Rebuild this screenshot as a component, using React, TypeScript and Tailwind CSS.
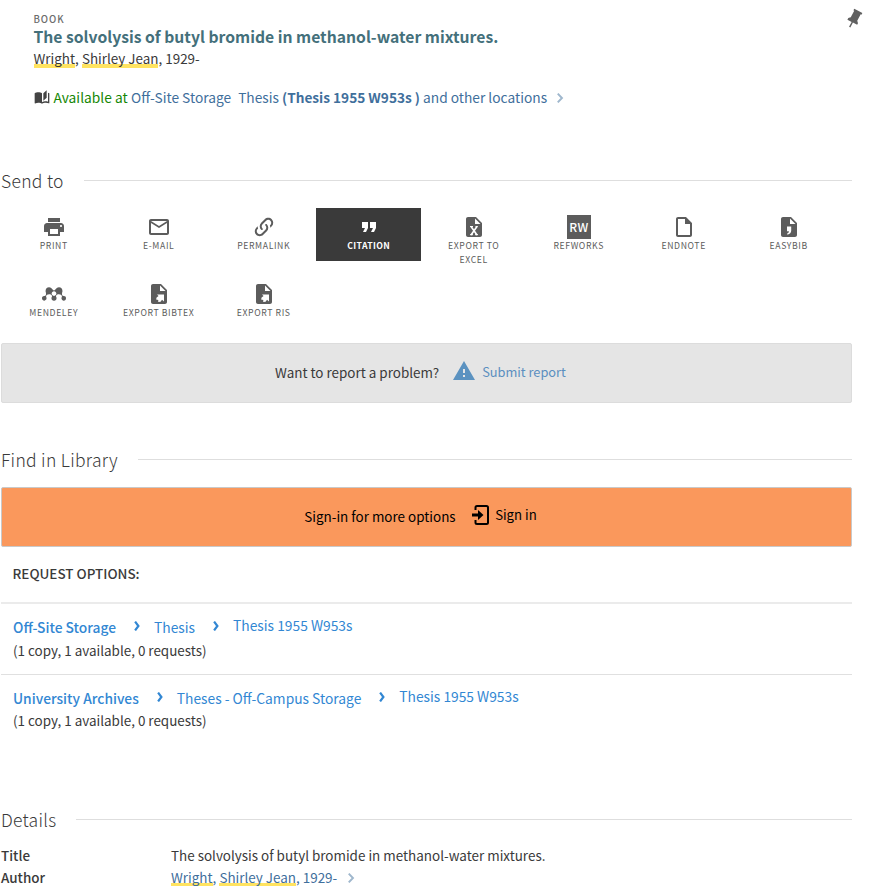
import type { ReactNode } from 'react';
import { FaMendeley } from 'react-icons/fa';

const FILE = 'M14 2H6c-1.1 0-2 .9-2 2v16c0 1.1.9 2 2 2h12c1.1 0 2-.9 2-2V8l-6-6zm-1 7V3.5L18.5 9H13z';
const PRINT =
  'M19 8H5c-1.66 0-3 1.34-3 3v6h4v4h12v-4h4v-6c0-1.66-1.34-3-3-3zm-3 11H8v-5h8v5zm3-7c-.55 0-1-.45-1-1s.45-1 1-1 1 .45 1 1-.45 1-1 1zm-1-9H6v4h12V3z';
const MAIL =
  'M22 6c0-1.1-.9-2-2-2H4c-1.1 0-2 .9-2 2v12c0 1.1.9 2 2 2h16c1.1 0 2-.9 2-2V6zm-2 0l-8 5-8-5h16zm0 12H4V8l8 5 8-5v10z';
const LINK =
  'M10.59,13.41C11,13.8 11,14.44 10.59,14.83C10.2,15.22 9.56,15.22 9.17,14.83C7.22,12.88 7.22,9.71 9.17,7.76V7.76L12.71,4.22C14.66,2.27 17.83,2.27 19.78,4.22C21.73,6.17 21.73,9.34 19.78,11.29L18.29,12.78C18.3,11.96 18.17,11.14 17.89,10.36L18.36,9.88C19.54,8.71 19.54,6.81 18.36,5.64C17.19,4.46 15.29,4.46 14.12,5.64L10.59,9.17C9.41,10.34 9.41,12.24 10.59,13.41M13.41,9.17C13.8,8.78 14.44,8.78 14.83,9.17C16.78,11.12 16.78,14.29 14.83,16.24V16.24L11.29,19.78C9.34,21.73 6.17,21.73 4.22,19.78C2.27,17.83 2.27,14.66 4.22,12.71L5.71,11.22C5.7,12.04 5.83,12.86 6.11,13.65L5.64,14.12C4.46,15.29 4.46,17.19 5.64,18.36C6.81,19.54 8.71,19.54 9.88,18.36L13.41,14.83C14.59,13.66 14.59,11.76 13.41,10.59C13,10.2 13,9.56 13.41,9.17Z';
const BOOK =
  'M19 2L14 6.5V17.5L19 13V2M6.5 5C4.55 5 2.45 5.4 1 6.5V21.16C1 21.41 1.25 21.66 1.5 21.66C1.6 21.66 1.65 21.59 1.75 21.59C3.1 20.94 5.05 20.5 6.5 20.5C8.45 20.5 10.55 20.9 12 22C13.35 21.15 15.8 20.5 17.5 20.5C19.15 20.5 20.85 20.81 22.25 21.56C22.35 21.61 22.4 21.59 22.5 21.59C22.75 21.59 23 21.34 23 21.09V6.5C22.4 6.05 21.75 5.75 21 5.5V19C19.9 18.65 18.7 18.5 17.5 18.5C15.8 18.5 13.35 19.15 12 20V6.5C10.55 5.4 8.45 5 6.5 5Z';

function Icon({ d, className = 'size-6', children }: { d?: string; className?: string; children?: ReactNode }) {
  return (
    <svg viewBox="0 0 24 24" fill="currentColor" className={`block shrink-0 ${className}`}>
      {d && <path d={d} />}
      {children}
    </svg>
  );
}

const Chevron = ({ className }: { className: string }) => (
  <Icon className={`size-[18px] text-[#9fb7cd] ${className}`}>
    <path d="M9 6.200 14.600 12 9 17.800" fill="none" stroke="currentColor" strokeWidth="2.600" />
  </Icon>
);

const CrumbChevron = ({ className = '' }: { className?: string }) => (
  <svg viewBox="0 0 6 10" className={`h-[10px] w-[6px] shrink-0 ${className}`} fill="none" stroke="#3287d3" strokeWidth="2.2">
    <path d="M1.100 .6 4.400 5 1.100 9.400" />
  </svg>
);

const ExportIcon = () => (
  <Icon d={FILE}>
    <path fill="#fff" d="M10 12.500h7v7l-2-1.800-1.400 2-2.400.200.1-2-2.200-.3.5-2.200 2-1.300z" />
  </Icon>
);

const actions: { label: string; icon: ReactNode; active?: boolean }[] = [
  { label: 'PRINT', icon: <Icon d={PRINT} /> },
  { label: 'E-MAIL', icon: <Icon d={MAIL} /> },
  { label: 'PERMALINK', icon: <Icon d={LINK} /> },
  { label: 'CITATION', icon: <Icon d="M6 17h3l2-4V7H5v6h3zm8 0h3l2-4V7h-6v6h3z" />, active: true },
  {
    label: 'EXPORT TO EXCEL',
    icon: (
      <Icon d={FILE}>
        <path d="M9 11.500 15 20M15 11.500 9 20" stroke="#fff" strokeWidth="1.6" />
        <path d="M8 11.500h3M8 19.700h3M13.500 11.500h2.300M13 19.700h3" stroke="#fff" strokeWidth="1" />
      </Icon>
    ),
  },
  {
    label: 'REFWORKS',
    icon: (
      <span className="flex size-6 items-center justify-center bg-[#5c5c5c] pl-px text-[12px] leading-6 font-medium tracking-[0.3px] text-white">
        RW
      </span>
    ),
  },
  { label: 'ENDNOTE', icon: <Icon d="M14 2H6c-1.1 0-2 .9-2 2v16c0 1.1.9 2 2 2h12c1.1 0 2-.9 2-2V8l-6-6zM6 20V4h7v5h5v11H6z" /> },
  {
    label: 'EASYBIB',
    icon: (
      <Icon d={FILE}>
        <path fill="#fff" d="M10 11.500h4.200v4.300c0 2-1.300 3.200-3.700 3.900l-.5-1.100c1.300-.5 1.900-1.200 1.900-2.300H10z" />
      </Icon>
    ),
  },
  { label: 'MENDELEY', icon: <FaMendeley className="size-6" /> },
  { label: 'EXPORT BIBTEX', icon: <ExportIcon /> },
  { label: 'EXPORT RIS', icon: <ExportIcon /> },
];

function Heading({ children }: { children: ReactNode }) {
  return (
    <div className="flex h-7 items-center gap-5 pl-px">
      <h2 className="text-[17.5px] leading-7 font-light tracking-[0.3px] whitespace-nowrap text-[#3a3a3a]">{children}</h2>
      <div className="-mt-px h-px flex-1 bg-[#dedede]" />
    </div>
  );
}

const Author = () => (
  <>
    <span className="bg-[linear-gradient(#ffe360,#ffe360)] bg-[length:100%_4px] bg-[position:0_16px] bg-no-repeat">Wright</span>,{' '}
    <span className="bg-[linear-gradient(#ffe360,#ffe360)] bg-[length:100%_4px] bg-[position:0_16px] bg-no-repeat">Shirley Jean</span>,
    1929-
  </>
);

function Holding({ library, area, call }: { library: string; area: string; call: string }) {
  return (
    <div className="group h-[71px] border-b border-[#e0e0e0] px-3 pt-[11px] last:border-b-0">
      <div className="flex h-6 text-[13.8px] text-[#3287d3]">
        <span className="leading-6 font-medium">{library}</span>
        <CrumbChevron className="mt-[6px] ml-[18px]" />
        <span className="ml-[14px] leading-6">{area}</span>
        <CrumbChevron className="mt-[6px] ml-[18px]" />
        <span className="-mt-[2px] ml-[14px] leading-6">{call}</span>
      </div>
      <div className="leading-[22px] group-last:-mt-px">(1 copy, 1 available, 0 requests)</div>
    </div>
  );
}

export default function App() {
  return (
    <div className="h-[886px] w-[869px] overflow-hidden bg-white font-['Noto_Sans_CJK_SC','Noto_Sans_CJK_JP',sans-serif] text-[13.45px] text-[#3a3a3a]">
      <header className="flex h-[167px] justify-between pt-[11px] pl-[33.5px]">
        <div>
          <div className="h-4 text-[9.6px] leading-4 font-medium tracking-[0.95px] text-[#6c6c6c]">BOOK</div>
          <h1 className="h-[19px] text-[15.7px] leading-5 font-bold text-[#44707b]">
            The solvolysis of butyl bromide in methanol-water mixtures.
          </h1>
          <div className="h-6 leading-6">
            <Author />
          </div>
          <div className="mt-[15px] flex h-6 items-center text-[13.75px] leading-6 text-[#3f6f9c]">
            <Icon d={BOOK} className="mr-1 size-[16px] text-[#444]" />
            <span className="text-[#168705]">Available at</span>
            <span className="ml-[3.5px]">Off-Site Storage</span>
            <span className="ml-[7px]">Thesis</span>
            <b className="ml-[3px] text-[13.65px]">(Thesis 1955 W953s )</b>
            <span className="ml-[3px]">and other locations</span>
            <Chevron className="mt-px ml-1" />
          </div>
        </div>
        <Icon className="mt-[-3px] mr-[4px] size-[22px] text-[#606060]">
          <path transform="rotate(28 12 12)" d="M16,12V4H17V2H7V4H8V12L6,14V16H11.2V22H12.8V16H18V14L16,12Z" />
        </Icon>
      </header>

      <main className="w-[852px]">
        <Heading>Send to</Heading>
        <div className="mt-[13px] ml-px grid h-[135px] w-[840px] grid-cols-8 grid-rows-[67px_67px]">
          {actions.map((a) => (
            <div
              key={a.label}
              className={`flex h-[53px] flex-col items-center px-3 pt-[7px] text-center text-[8.7px] leading-[14px] ${
                a.active ? 'bg-[#3a3a3a] font-bold tracking-[0.35px] text-white' : 'tracking-[0.6px] text-[#5c5c5c]'
              }`}
            >
              {a.icon}
              <span className="-mx-2 pl-[0.4px]">{a.label === 'EXPORT TO EXCEL' ? <>EXPORT TO<br />EXCEL</> : a.label}</span>
            </div>
          ))}
        </div>
        <div className="ml-px flex h-[60px] items-center justify-center rounded-xs border border-[#dcdcdc] bg-[#e5e5e5] pr-3">
          <span className="-mt-[2px]">Want to report a problem?</span>
          <Icon className="-mt-1 mr-[6px] ml-[13px] size-6 text-[#5b92c0]" d="M1 21h22L12 2 1 21zm12-3h-2v-2h2v2zm0-4h-2v-4h2v4z" />
          <span className="-mt-[2px] text-[12.8px] text-[#5b8fc0]">Submit report</span>
        </div>

        <div className="mt-[43px]">
          <Heading>Find in Library</Heading>
        </div>
        <div className="mt-[13px] ml-px flex h-[60px] items-center justify-center rounded-xs border border-[#c9c9c9] bg-[#fa985c] pr-3 text-black">
          <span className="-mt-[2px]">Sign-in for more options</span>
          <Icon className="-mt-1 mr-[3.500px] ml-3 size-6">
            <path d="M7.500 7V4.500q0-1.500 1.500-1.500h9.500q1.500 0 1.500 1.500v15q0 1.500-1.500 1.500H9q-1.500 0-1.500-1.500V17" fill="none" stroke="currentColor" strokeWidth="2" />
            <path d="M4 10.500h6V7l5.500 5-5.500 5v-3.500H4z" />
          </Icon>
          <span className="-mt-1 text-[13.2px]">Sign in</span>
        </div>
        <div className="h-[55px] pt-[14px] pl-[12.5px] leading-6 font-medium">REQUEST OPTIONS:</div>
        <div className="ml-px border-t-2 border-[#ebebeb]">
          <Holding library="Off-Site Storage" area="Thesis" call="Thesis 1955 W953s" />
          <Holding library="University Archives" area="Theses - Off-Campus Storage" call="Thesis 1955 W953s" />
        </div>

        <div className="mt-[60px]">
          <Heading>Details</Heading>
        </div>
        <div className="mt-[10px] grid grid-cols-[170px_1fr] grid-rows-[22px_22px] pl-px leading-[22px]">
          <span className="font-medium">Title</span>
          <span>The solvolysis of butyl bromide in methanol-water mixtures.</span>
          <span className="font-medium">Author</span>
          <span className="flex items-center text-[#3f6f9c]">
            <span>
              <Author />
            </span>
            <Chevron className="mt-px ml-[5px]" />
          </span>
        </div>
      </main>
    </div>
  );
}
